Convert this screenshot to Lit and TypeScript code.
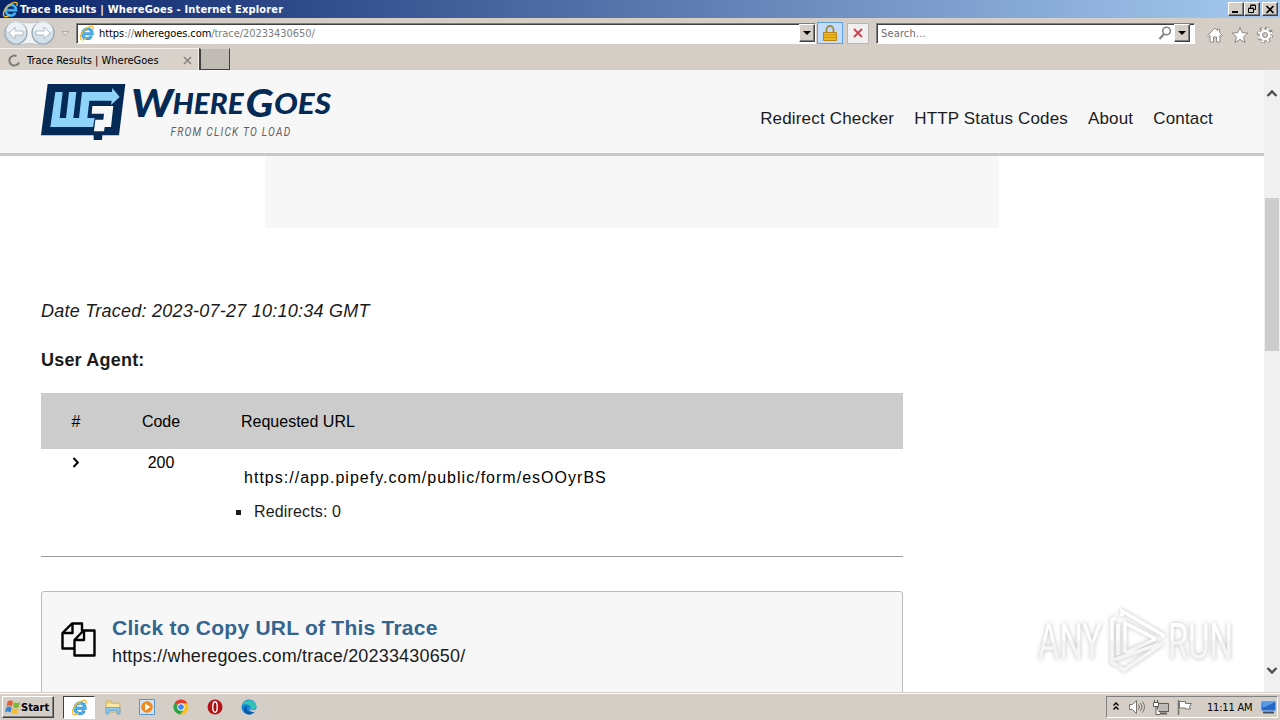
import { LitElement, html, css } from 'lit';
import { customElement, property } from 'lit/decorators.js';

@customElement('ie-icon')
export class IeIcon extends LitElement {
  @property({ type: Number }) size = 16;

  static styles = css`
    :host {
      display: inline-flex;
      flex: none;
    }
  `;

  render() {
    return html`
      <svg width=${this.size} height=${this.size} viewBox="0 0 24 24" fill="none">
        <path d="M5.500 13.200h14.300c.6-9.500-13-10-14.300-.8-1 9 10.500 10.300 13 4" stroke="#1c78c4" stroke-width="4.200"/>
        <path d="M5.500 13.200h14.300c.6-9.500-13-10-14.300-.8-1 9 10.500 10.300 13 4" stroke="#49b4f0" stroke-width="2.800"/>
        <path d="M4 22C-1.500 19 5 7.500 14.500 3c5.500-2.500 8-.5 6.300 4M4 22c2 .8 5-.5 7-2" stroke="#efbb35" stroke-width="2"/>
      </svg>
    `;
  }
}

@customElement('browser-chrome')
export class BrowserChrome extends LitElement {
  static styles = css`
    :host {
      display: block;
      height: 70px;
      background: #d5cec6;
      font-family: Tahoma, "DejaVu Sans Condensed", "DejaVu Sans", sans-serif;
      font-size: 11px;
      color: #000;
    }
    svg {
      display: block;
      flex: none;
    }
    .title {
      display: flex;
      align-items: center;
      height: 18px;
      padding: 0 2px;
      box-sizing: border-box;
      background: linear-gradient(90deg, #0a246a, #a6caf0);
      color: #fff;
      font-weight: bold;
      white-space: nowrap;
    }
    .title span {
      flex: 1;
      margin-left: 1px;
      letter-spacing: 0.17px;
    }
    .btn {
      display: flex;
      align-items: center;
      justify-content: center;
      box-sizing: border-box;
      width: 16px;
      height: 14px;
      background: #d5cec6;
      border: 1px solid;
      border-color: #fff #404040 #404040 #fff;
      box-shadow: inset -1px -1px #808080;
    }
    .btn.close {
      margin-left: 2px;
    }
    .address {
      display: flex;
      align-items: center;
      height: 30px;
    }
    .nav {
      margin-left: 2px;
    }
    .field {
      display: flex;
      align-items: center;
      box-sizing: border-box;
      height: 21px;
      background: #fff;
      border: 1px solid;
      border-color: #808080 #fff #fff #808080;
      box-shadow: inset 1px 1px #404040;
    }
    .url {
      width: 740px;
      margin-left: 4px;
      padding-left: 2px;
    }
    .url span {
      flex: 1;
      margin-left: 4px;
      padding-top: 1px;
      color: #7d7d7d;
      letter-spacing: -0.07px;
    }
    .url b {
      font-weight: normal;
      color: #000;
    }
    .drop {
      width: 16px;
      height: 18px;
    }
    .lock {
      display: flex;
      align-items: center;
      justify-content: center;
      box-sizing: border-box;
      width: 26px;
      height: 22px;
      margin-left: 1px;
      background: #c3dcfa;
      border: 1px solid #5fa0ea;
    }
    .stop {
      display: flex;
      align-items: center;
      justify-content: center;
      box-sizing: border-box;
      width: 22px;
      height: 21px;
      margin-left: 4px;
      background: #f1eff0;
      border: 1px solid #b9b4b0;
    }
    .search {
      width: 319px;
      margin-left: 7px;
      padding: 0 4px 0 4px;
      color: #6d6d6d;
    }
    .search span {
      flex: 1;
      padding-top: 1px;
      letter-spacing: 0.15px;
    }
    .tools {
      display: flex;
      gap: 7px;
      margin: 3px 0 0 11px;
    }
    .tabs {
      display: flex;
      height: 22px;
    }
    .tab {
      display: flex;
      align-items: center;
      box-sizing: border-box;
      width: 199px;
      padding: 2px 6px 0 8px;
      border-top: 1px solid #f4f1ee;
      border-right: 1px solid #f4f1ee;
      background: #d8d2ca;
    }
    .tab span {
      flex: 1;
      margin-left: 6px;
    }
    .newtab {
      box-sizing: border-box;
      width: 31px;
      border: 1px solid #404040;
      border-top-color: #d5cec6;
      border-width: 1px 1px 1px 2px;
      background: #c1bbb5;
    }
  `;

  render() {
    const arrow = html`<svg width="8" height="5" viewBox="0 0 8 5"><path d="M0 0h8L4 4z"/></svg>`;
    return html`
      <div class="title">
        <ie-icon size="17"></ie-icon>
        <span>Trace Results | WhereGoes - Internet Explorer</span>
        <div class="btn"><svg width="10" height="9"><path d="M1 6h6v2H1z"/></svg></div>
        <div class="btn">
          <svg width="10" height="10" fill="none" stroke="#000">
            <path d="M3.500 3.500v-2h5v4h-2M3.500 1h5M1.500 4.500h5v4h-5zM1.500 4h5" />
          </svg>
        </div>
        <div class="btn close">
          <svg width="10" height="9"><path d="M1.500 1l7 7M8.500 1l-7 7" stroke="#000" stroke-width="1.700"/></svg>
        </div>
      </div>
      <div class="address">
        <svg class="nav" width="70" height="30" viewBox="0 0 70 30">
          <path d="M14 3q13 4 27 0c15 2 15 22 0 24q-14-3-27 0C-2 25-2 5 14 3z" fill="#f1f3f5" stroke="#b8bdc2" stroke-width=".8"/>
          <g fill="#d3dfe9" stroke="#9aa7b3" stroke-width="1.200">
            <circle cx="14" cy="15" r="11"/>
            <circle cx="41" cy="15" r="11"/>
          </g>
          <path d="M4 13a10 10 0 0 1 20 0q-10 3-20 0M31 13a10 10 0 0 1 20 0q-10 3-20 0" fill="#fff" opacity=".6"/>
          <path d="M7 15l6-6v4h8v4h-8v4zM48 15l-6-6v4h-8v4h8v4z" fill="#fff" stroke="#a9b7c3" stroke-width=".9"/>
          <path d="M60 13.500h7l-3.500 4z" fill="#e9e5e0" stroke="#b1aba4"/>
        </svg>
        <div class="field url">
          <ie-icon size="16"></ie-icon>
          <span><b>https</b>://<b>wheregoes.com</b>/trace/20233430650/</span>
          <div class="btn drop">${arrow}</div>
        </div>
        <div class="lock">
          <svg width="14" height="16" viewBox="0 0 14 16">
            <path d="M3.500 8V4.500a3.500 3.500 0 0 1 7 0V8" fill="none" stroke="#9b8c4a" stroke-width="1.800"/>
            <path d="M.5 7.500h13v8H.5z" fill="#efb924" stroke="#b98510"/>
            <path d="M1 10h12M1 12.500h12" stroke="#cf9614"/>
          </svg>
        </div>
        <div class="stop">
          <svg width="12" height="12"><path d="M2 2l8 8M10 2l-8 8" stroke="#c9404c" stroke-width="1.800"/></svg>
        </div>
        <div class="field search">
          <span>Search...</span>
          <svg width="16" height="14" fill="none" stroke="#858585">
            <circle cx="8.500" cy="5" r="3.800" stroke-width="1.600"/>
            <path d="M6 8l-4.500 5" stroke-width="2.200"/>
          </svg>
          <div class="btn drop">${arrow}</div>
        </div>
        <div class="tools">
          <svg width="18" height="18" viewBox="0 0 18 18">
            <path d="M1.500 9.500L9 2l2.500 2.500V3h2v3.500l3 3-1 1-1.500-1.300V16h-3.500v-5h-3v5H4V9.200l-1.500 1.300z" fill="#fff" stroke="#8d8985"/>
          </svg>
          <svg width="18" height="18" viewBox="0 0 18 18">
            <path d="M9 1.200l2.200 5.500 5.800.4-4.500 3.700 1.500 5.700L9 13.400l-5 3.100 1.500-5.700L1 7.100l5.800-.4z" fill="#fff" stroke="#8d8985"/>
          </svg>
          <svg width="18" height="18" viewBox="0 0 18 18">
            <circle cx="9" cy="9" r="6.600" fill="none" stroke="#8d8985" stroke-width="3.400" stroke-dasharray="2.900 2.280"/>
            <circle cx="9" cy="9" r="6" fill="#fff" stroke="#8d8985"/>
            <circle cx="9" cy="9" r="6.500" fill="none" stroke="#fff" stroke-width="2" stroke-dasharray="1.900 3.280" stroke-dashoffset="-.5"/>
            <circle cx="9" cy="9" r="2.500" fill="#d5cec6" stroke="#8d8985"/>
          </svg>
        </div>
      </div>
      <div class="tabs">
        <div class="tab">
          <svg width="13" height="13" fill="none" stroke="#7f7b78" stroke-width="2">
            <path d="M8.500 2A5 5 0 1 0 11 8.500"/>
          </svg>
          <span>Trace Results | WhereGoes</span>
          <svg width="9" height="9"><path d="M1 1l7 7M8 1l-7 7" stroke="#8c8884" stroke-width="1.700"/></svg>
        </div>
        <div class="newtab"></div>
      </div>
    `;
  }
}

@customElement('trace-page')
export class TracePage extends LitElement {
  static styles = css`
    :host {
      display: block;
      flex: 1;
      background: #fff;
      overflow: hidden;
      font-family: Arial, "Liberation Sans", sans-serif;
      color: #1b1b1b;
    }
    svg {
      display: block;
      flex: none;
      overflow: visible;
    }
    header {
      display: flex;
      box-sizing: border-box;
      height: 86px;
      padding: 12px 51px 0 41px;
      justify-content: space-between;
      background: #f7f7f7;
      border-bottom: 3px solid #c9c9c9;
    }
    nav {
      display: flex;
      gap: 20px;
      margin-top: 27px;
      font-size: 17px;
      line-height: 20px;
      letter-spacing: 0.17px;
    }
    .big {
      font: italic 900 38px Lato, sans-serif;
      fill: #042a55;
    }
    .small {
      font: italic 900 29px Lato, sans-serif;
      fill: #042a55;
    }
    .tagline {
      font: italic 400 13.2px Roboto, sans-serif;
      letter-spacing: 1.6px;
      fill: #5f6164;
    }
    .ad {
      width: 734px;
      height: 72px;
      margin-left: 265px;
      background: #f7f7f7;
    }
    .content {
      width: 862px;
      margin-left: 41px;
    }
    .date {
      padding-top: 72px;
      font-size: 18px;
      line-height: 22px;
      letter-spacing: 0.25px;
      font-style: italic;
    }
    .agent {
      margin-top: 27px;
      font-size: 18px;
      line-height: 22px;
      font-weight: bold;
      letter-spacing: 0.2px;
    }
    .row {
      display: grid;
      grid-template-columns: 70px 100px 1fr;
      font-size: 16px;
      color: #000;
      text-align: center;
    }
    .head {
      height: 56px;
      margin-top: 22px;
      line-height: 57px;
      background: #ccc;
    }
    .head .url {
      text-align: left;
      padding-left: 30px;
    }
    .body {
      height: 107px;
      border-bottom: 1px solid #999;
      line-height: 28px;
    }
    .chevron {
      margin: 8px 0 0 31px;
    }
    .body .url {
      padding: 15px 0 0 33px;
      text-align: left;
      letter-spacing: 1.02px;
    }
    .redirects {
      display: flex;
      align-items: center;
      gap: 13px;
      margin: 6px 0 0 -8px;
      color: #1b1b1b;
      letter-spacing: 0.15px;
    }
    .bullet {
      width: 5px;
      height: 5px;
      background: #1b1b1b;
    }
    .copy {
      display: flex;
      box-sizing: border-box;
      height: 140px;
      margin-top: 34px;
      padding: 22px 20px 0 19px;
      background: #f7f7f7;
      border: 1px solid #bbb;
      border-radius: 3px;
    }
    .copy svg {
      margin-top: 8px;
    }
    .copy div {
      margin-left: 16px;
    }
    .link {
      display: block;
      font-size: 21px;
      line-height: 27px;
      font-weight: bold;
      color: #34658f;
      letter-spacing: 0.24px;
    }
    .target {
      display: block;
      font-size: 18px;
      line-height: 30px;
      letter-spacing: 0.18px;
    }
  `;

  render() {
    return html`
      <header>
        <svg width="294" height="60" viewBox="33 30 882 180">
          <path d="M53 36H286L267 190H217L216 204H191V190H33z" fill="#042a55"/>
          <path d="M76 60H98L89 138H108L117 60H139L130 138H147L156 60H246L247 48L269 75L243 99L245 86H178L172 138H194L189 165H61z" fill="#8fd3fb"/>
          <path d="M187 102H250L243 165H224L222 178H192L196 143H220L222 125H185z" fill="#f7f7f7"/>
          <g transform="scale(3)">
            <text class="big" x="101" y="45.300" textLength="42" lengthAdjust="spacingAndGlyphs">W</text>
            <text class="small" x="142.500" y="42" textLength="71" lengthAdjust="spacingAndGlyphs">HERE</text>
            <text class="big" x="215.500" y="45.300" textLength="28" lengthAdjust="spacingAndGlyphs">G</text>
            <text class="small" x="244" y="42" textLength="57" lengthAdjust="spacingAndGlyphs">OES</text>
            <text class="tagline" x="140.500" y="63.800" textLength="121" lengthAdjust="spacingAndGlyphs">FROM CLICK TO LOAD</text>
          </g>
        </svg>
        <nav>
          <span>Redirect Checker</span>
          <span>HTTP Status Codes</span>
          <span>About</span>
          <span>Contact</span>
        </nav>
      </header>
      <div class="ad"></div>
      <div class="content">
        <div class="date">Date Traced: 2023-07-27 10:10:34 GMT</div>
        <div class="agent">User Agent:</div>
        <div class="row head">
          <div>#</div>
          <div>Code</div>
          <div class="url">Requested URL</div>
        </div>
        <div class="row body">
          <svg class="chevron" width="8" height="11"><path d="M1.500 1l4.300 4.500L1.500 10" fill="none" stroke="#000" stroke-width="2"/></svg>
          <div>200</div>
          <div class="url">
            https://app.pipefy.com/public/form/esOOyrBS
            <div class="redirects"><i class="bullet"></i>Redirects: 0</div>
          </div>
        </div>
        <div class="copy">
          <svg width="35" height="35" viewBox="0 0 35 35" fill="none" stroke="#000" stroke-width="2.400" stroke-linejoin="round">
            <path d="M13 26.500H1.500V11l9.500-9.500h10V9M11.500 1.500v9.500h-10"/>
            <path d="M22.500 8.500h11v25h-20V18z M23 8.500V18h-9.500"/>
          </svg>
          <div>
            <span class="link">Click to Copy URL of This Trace</span>
            <span class="target">https://wheregoes.com/trace/20233430650/</span>
          </div>
        </div>
      </div>
    `;
  }
}

@customElement('task-bar')
export class TaskBar extends LitElement {
  static styles = css`
    :host {
      display: flex;
      align-items: center;
      box-sizing: border-box;
      height: 28px;
      padding: 2px 2px 0;
      background: #d5cec6;
      box-shadow: inset 0 1px #d5cec6, inset 0 2px #fff;
      font-family: Tahoma, "DejaVu Sans Condensed", "DejaVu Sans", sans-serif;
      font-size: 11px;
      color: #000;
    }
    svg {
      display: block;
      flex: none;
    }
    .start {
      display: flex;
      align-items: center;
      box-sizing: border-box;
      width: 52px;
      height: 22px;
      padding-left: 1px;
      border: 1px solid;
      border-color: #fff #404040 #404040 #fff;
      box-shadow: inset -1px -1px #808080;
      font-weight: bold;
    }
    .active {
      display: flex;
      align-items: center;
      justify-content: center;
      box-sizing: border-box;
      width: 32px;
      height: 23px;
      margin-left: 9px;
      background: #fff;
      border: 1px solid;
      border-color: #404040 #fff #fff #404040;
    }
    .apps {
      display: flex;
      flex: 1;
      gap: 18px;
      margin-left: 10px;
    }
    .tray {
      display: flex;
      align-items: center;
      box-sizing: border-box;
      width: 172px;
      height: 22px;
      padding-left: 5px;
      border: 1px solid;
      border-color: #808080 #fff #fff #808080;
      white-space: nowrap;
    }
    .tray svg {
      margin-right: 8px;
    }
    .tray span {
      flex: 1;
      margin-left: 6px;
      letter-spacing: -0.2px;
    }
    .tray .desk {
      margin: 0;
    }
  `;

  render() {
    return html`
      <div class="start">
        <svg width="17" height="16" viewBox="0 0 17 16">
          <path d="M3.500 2.500q3-2 5.500 0L8 7.500q-3-2-5.500 0z" fill="#e8602c"/>
          <path d="M10 3q3 2 6 0l-1.200 5q-3 2-5.800 0z" fill="#7fb93c"/>
          <path d="M2.200 8.500q3-2 5.500 0l-1 5q-3-2-5.700 0z" fill="#3d83d3"/>
          <path d="M8.700 9q3 2 6 0l-1.200 5q-3 2-5.800 0z" fill="#f6bd2d"/>
        </svg>
        Start
      </div>
      <div class="active"><ie-icon size="17"></ie-icon></div>
      <div class="apps">
        <svg width="16" height="16" viewBox="0 0 16 16">
          <path d="M1 2h5l1 2h8v9H1z" fill="#efd57a" stroke="#c9a94b" stroke-width=".7"/>
          <path d="M2 5h12v3H2z" fill="#f7e7a6"/>
          <path d="M1 15V8.500h14V15h-3v-3.500H4V15z" fill="#8cc5e8" stroke="#5e9cc6" stroke-width=".7"/>
        </svg>
        <svg width="16" height="16" viewBox="0 0 16 16">
          <path d="M.5.500h15v15H.5z" fill="#cfe4f5" stroke="#5d94c8"/>
          <circle cx="8" cy="8" r="5.800" fill="#f08a1c"/>
          <path d="M6 4.500L11.500 8 6 11.500z" fill="#fff"/>
        </svg>
        <svg width="16" height="16" viewBox="0 0 16 16">
          <circle cx="8" cy="8" r="7.500" fill="#fbc116"/>
          <path d="M8 8L1.500 4.200A7.500 7.500 0 0 1 14.500 4.300H8z" fill="#e33b2e"/>
          <path d="M1.500 4.200A7.500 7.500 0 0 0 7.500 15.500L11 9.800 8 8z" fill="#2fa24c"/>
          <circle cx="8" cy="8" r="3.700" fill="#fff"/>
          <circle cx="8" cy="8" r="2.800" fill="#4285f4"/>
        </svg>
        <svg width="16" height="16" viewBox="0 0 16 16">
          <circle cx="8" cy="8" r="7.500" fill="#b51218"/>
          <ellipse cx="8" cy="8" rx="2.200" ry="5.200" fill="#a00d13" stroke="#fff" stroke-width="1.400"/>
        </svg>
        <svg width="16" height="16" viewBox="0 0 16 16">
          <circle cx="8" cy="8" r="7.500" fill="#1583d8"/>
          <path d="M1 6C3 0 14-1 15.500 7.500c0 3-4 4-6 2.500 1.500-3-3-6-8.500-4z" fill="#35c1b5"/>
          <path d="M6 7.500c-2 4 3 7 7.500 5.500C10 17 3 16 3 10c0-2 1.500-3 3-2.500z" fill="#0c59a4"/>
          <path d="M8.500 8.500c0 3 4 3.500 7 1.500l-.5 2c-3 2-7 .5-6.500-3.500z" fill="#d5cec6"/>
        </svg>
      </div>
      <div class="tray">
        <svg width="9" height="12" fill="none" stroke="#000" stroke-width="1.400"><path d="M1.500 4.500L4 2l2.500 2.500M1.500 8.500L4 6l2.500 2.500"/></svg>
        <svg width="16" height="14" viewBox="0 0 16 14" fill="none" stroke="#77736f">
          <path d="M.5 4.500h3l4-4v13l-4-4h-3z" fill="#fff"/>
          <path d="M9.500 4.500q2 2.500 0 5M11.500 3q3 4 0 8M13.500 1.500q4 5.500 0 11"/>
        </svg>
        <svg width="16" height="15" viewBox="0 0 16 15" stroke="#5f5b58">
          <path d="M4.500 3.500h11v8h-11z" fill="#bdb9b5"/>
          <path d="M7 13.500h7" stroke-width="2"/>
          <path d="M.5 2.500h5v4h-5zM3 7v7.500h4M1.500 2V0M4.500 2V0" fill="#fff"/>
        </svg>
        <svg width="16" height="15" viewBox="0 0 16 15">
          <path d="M1.500 0v15" stroke="#77736f" stroke-width="1.500"/>
          <path d="M2.500 1.500h6v2h6l-2 3 1 2.500h-5v-1h-6z" fill="#fff" stroke="#77736f"/>
        </svg>
        <span>11:11 AM</span>
        <svg class="desk" width="17" height="14" viewBox="0 0 17 14">
          <path d="M1 1h15v10H1z" fill="#2468c8" stroke="#bcd3ea"/>
          <path d="M2 2h13L3 8z" fill="#5b9ae6"/>
          <path d="M3 12.500h11" stroke="#3a4a60" stroke-width="2"/>
        </svg>
      </div>
    `;
  }
}

@customElement('app-root')
export class AppRoot extends LitElement {
  static styles = css`
    :host {
      position: relative;
      display: flex;
      flex-direction: column;
      width: 1280px;
      height: 720px;
      overflow: hidden;
    }
    .view {
      display: flex;
      height: 622px;
    }
    .scroll {
      display: flex;
      flex-direction: column;
      align-items: center;
      box-sizing: border-box;
      width: 16px;
      padding: 18px 0 16px;
      background: #f0f0f0;
    }
    .thumb {
      width: 14px;
      height: 153px;
      margin: 100px 0 auto;
      background: #cdcdcd;
    }
    .watermark {
      position: absolute;
      left: 1030px;
      top: 600px;
      overflow: visible;
      filter: drop-shadow(0 0 2px rgba(0, 0, 0, 0.26));
    }
  `;

  render() {
    return html`
      <browser-chrome></browser-chrome>
      <div class="view">
        <trace-page></trace-page>
        <div class="scroll">
          <svg width="12" height="10" fill="none" stroke="#505050" stroke-width="2.400"><path d="M1.500 8L6 3.500 10.500 8"/></svg>
          <div class="thumb"></div>
          <svg width="12" height="10" fill="none" stroke="#505050" stroke-width="2.400"><path d="M1.500 2L6 6.500 10.500 2"/></svg>
        </div>
      </div>
      <task-bar></task-bar>
      <svg class="watermark" width="210" height="80" viewBox="0 0 210 80">
        <defs>
          <linearGradient id="fade" gradientUnits="userSpaceOnUse" x1="0" y1="10" x2="0" y2="70">
            <stop offset=".5" stop-color="#fff"/>
            <stop offset=".52" stop-color="#f5f5f5"/>
          </linearGradient>
        </defs>
        <g font-family="Roboto" font-size="50" font-weight="400" fill="url(#fade)">
          <text x="8" y="59" textLength="64" lengthAdjust="spacingAndGlyphs">ANY</text>
          <text x="138" y="59" textLength="65" lengthAdjust="spacingAndGlyphs">RUN</text>
        </g>
        <g fill="none" stroke="url(#fade)" stroke-width="3.500">
          <path d="M92 16v-5l41 24v3M95 53V23l31 16"/>
          <path d="M86 18l-4 1.500v43l5 3M88 24v31"/>
          <path d="M84 60l45-16M95 53l31-14M133 43L94 70l-5-3"/>
        </g>
      </svg>
    `;
  }
}
